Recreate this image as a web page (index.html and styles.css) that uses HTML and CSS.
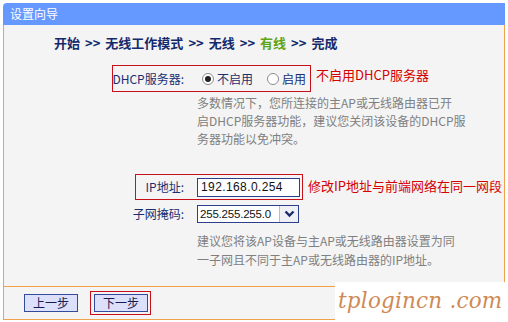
FILE: index.html
```html
<html>
    <head>
        <title>设置向导</title>
        <link rel="stylesheet" href="styles.css">
    </head>
    <body>
        <div class="panel">
            <div class="title">设置向导</div>

            <div class="content">
                <div class="steps">
                    <span>开始</span><span class="sep">&gt;&gt;</span><span>无线工作模式</span><span class="sep">&gt;&gt;</span><span>无线</span><span class="sep">&gt;&gt;</span><span class="current">有线</span><span class="sep">&gt;&gt;</span><span>完成</span>
                </div>

                <div class="row row-dhcp">
                    <span class="mark mark-dhcp"></span>
                    <label class="label">DHCP服务器:</label>
                    <div class="field">
                        <label class="option"><input type="radio" name="dhcp" class="radio" checked><span>不启用</span></label>
                        <label class="option"><input type="radio" name="dhcp" class="radio"><span>启用</span></label>
                    </div>
                    <span class="note note-dhcp">不启用DHCP服务器</span>
                </div>

                <p class="hint hint-dhcp">多数情况下，您所连接的主AP或无线路由器已开<br>启DHCP服务器功能，建议您关闭该设备的DHCP服<br>务器功能以免冲突。</p>

                <div class="row row-ip">
                    <span class="mark mark-ip"></span>
                    <label class="label">IP地址:</label>
                    <div class="field">
                        <div class="input">192.168.0.254</div>
                    </div>
                    <span class="note note-ip">修改IP地址与前端网络在同一网段</span>
                </div>

                <div class="row row-mask">
                    <label class="label">子网掩码:</label>
                    <div class="field">
                        <div class="select">
                            <span class="select-text">255.255.255.0</span>
                            <span class="select-arrow">
                                <svg width="11" height="8" viewBox="0 0 11 8"><polyline points="1.5,1.5 5.5,5.5 9.5,1.5" fill="none" stroke="#1c2a66" stroke-width="2.4"/></svg>
                            </span>
                        </div>
                    </div>
                </div>

                <p class="hint hint-mask">建议您将该AP设备与主AP或无线路由器设置为同<br>一子网且不同于主AP或无线路由器的IP地址。</p>
            </div>

            <div class="footer">
                <button class="btn">上一步</button>
                <span class="btn-mark"><button class="btn">下一步</button></span>
            </div>
        </div>

        <div class="watermark">tplogincn .com</div>
    </body>
</html>
```

FILE: styles.css
```css
body {
    margin: 0;
    width: 508px;
    height: 322px;
    background: #ffffff;
    font-family: "Noto Sans CJK SC", sans-serif;
    font-size: 12px;
    position: relative;
    overflow: hidden;
}
.panel {
    margin: 3px 0 0 3px;
    width: 502px;
}
.title {
    height: 22px;
    line-height: 22px;
    padding-left: 7px;
    background: #6699ff;
    color: #ffffff;
    font-size: 12px;
    border-top-left-radius: 4px;
}
.content {
    box-sizing: border-box;
    height: 261px;
    padding-top: 9px;
    background: #f4f4f4;
    border-left: 1px solid #f0a24a;
    border-right: 1px solid #f0a24a;
}
.steps {
    padding-left: 50px;
    height: 18px;
    line-height: 18px;
    font-size: 13px;
    font-weight: bold;
    color: #142a6c;
}
.steps .sep {
    margin: 0 5px;
}
.steps .current {
    color: #5fa514;
}
.row {
    position: relative;
    display: grid;
    grid-template-columns: 181px 104px auto;
    column-gap: 12px;
    align-items: center;
}
.row-dhcp {
    margin-top: 13px;
    height: 27px;
}
.row-ip {
    margin-top: 26px;
    height: 26px;
}
.row-mask {
    margin-top: 3px;
    height: 22px;
}
.label {
    text-align: right;
    color: #1a2f72;
    font-size: 12px;
    line-height: 16px;
    padding-right: 1px;
    white-space: nowrap;
}
.field {
    display: flex;
    align-items: center;
    white-space: nowrap;
}
.option {
    display: inline-flex;
    align-items: center;
    gap: 3px;
    color: #1a2f72;
    line-height: 16px;
    white-space: nowrap;
    flex: none;
}
.option:first-child {
    margin-left: 5px;
    margin-right: 14px;
}
.radio {
    appearance: none;
    -webkit-appearance: none;
    box-sizing: border-box;
    width: 12px;
    height: 12px;
    margin: 0;
    border: 1px solid #8c8c8c;
    border-radius: 50%;
    background: #ffffff;
    display: inline-grid;
    place-content: center;
    flex: none;
}
.radio:checked::before {
    content: "";
    width: 6px;
    height: 6px;
    border-radius: 50%;
    background: #222222;
}
.note {
    color: #d40000;
    font-size: 13px;
    line-height: 18px;
    white-space: nowrap;
}
.note-dhcp {
    margin-left: 3px;
    margin-top: -7px;
}
.note-ip {
    margin-left: -5px;
    margin-top: -3px;
}
.mark {
    position: absolute;
    top: 0;
    height: 100%;
    box-sizing: border-box;
    border: 1px solid #c8101a;
}
.mark-dhcp {
    left: 108px;
    width: 199px;
}
.mark-ip {
    left: 131px;
    width: 168px;
}
.hint {
    margin: 0 0 0 193px;
    color: #808080;
    font-size: 12px;
    white-space: nowrap;
}
.hint-dhcp {
    margin-top: 2px;
    line-height: 18px;
}
.hint-mask {
    margin-top: 6px;
    line-height: 19px;
}
.input {
    box-sizing: border-box;
    width: 103px;
    height: 19px;
    line-height: 17px;
    padding-left: 3px;
    border: 1px solid #2b3f8c;
    background: #ffffff;
    font-family: "Liberation Sans", sans-serif;
    font-size: 12px;
    letter-spacing: 0.4px;
    color: #111111;
}
.select {
    box-sizing: border-box;
    display: flex;
    width: 102px;
    height: 18px;
    border: 1px solid #2b3f8c;
    background: #ffffff;
}
.select-text {
    flex: 1;
    padding-left: 2px;
    line-height: 16px;
    font-family: "Liberation Sans", sans-serif;
    font-size: 11.5px;
    letter-spacing: -0.2px;
    color: #111111;
}
.select-arrow {
    width: 18px;
    border-left: 1px solid #b8bccc;
    background: #eef0f6;
    display: flex;
    align-items: center;
    justify-content: center;
}
.footer {
    box-sizing: border-box;
    height: 34px;
    display: flex;
    align-items: center;
    padding-left: 20px;
    gap: 12px;
    background: #f4f4f4;
    border: 1px solid #f0a24a;
}
.btn {
    box-sizing: border-box;
    width: 54px;
    height: 18px;
    padding: 0;
    margin: 0;
    border: 1px solid #344a9a;
    background: #dde0fb;
    color: #1a1a50;
    font-family: "Noto Sans CJK SC", sans-serif;
    font-size: 12px;
    line-height: 16px;
}
.btn-mark {
    display: inline-flex;
    padding: 2px 2px 2px 3px;
    border: 1px solid #c8101a;
}
.watermark {
    position: absolute;
    left: 335px;
    top: 282px;
    width: 173px;
    height: 40px;
    background: #ffffff;
    color: #cf8a55;
    font-family: "DejaVu Serif", serif;
    font-style: italic;
    font-size: 21.5px;
    line-height: 38px;
    letter-spacing: 0.2px;
    padding-left: 3px;
    box-sizing: border-box;
    white-space: nowrap;
}
```
